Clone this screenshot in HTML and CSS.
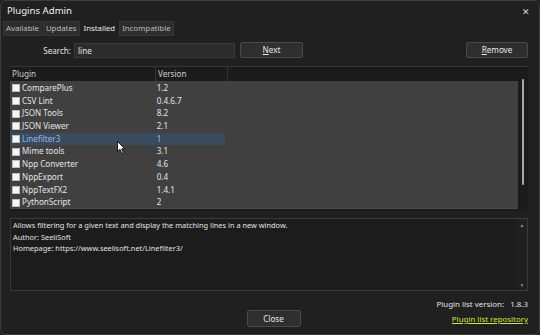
FILE: index.html
```html
<html>
<head><meta charset="utf-8">
<link rel="stylesheet" href="styles.css">
</head>
<body>
<div class="window">
  <div class="titlebar">
    <span class="title">Plugins Admin</span>
    <span class="close-x">&#x2715;</span>
  </div>

  <div class="tabs">
    <span class="tab">Available</span>
    <span class="tab">Updates</span>
    <span class="tab sel">Installed</span>
    <span class="tab">Incompatible</span>
  </div>

  <div class="search-row">
    <span class="search-label">Search:</span>
    <div class="search-input">line</div>
    <div class="btn btn-next"><u>N</u>ext</div>
    <div class="spacer"></div>
    <div class="btn btn-remove"><u>R</u>emove</div>
  </div>

  <div class="list">
    <div class="list-head">
      <div class="col-name">Plugin</div>
      <div class="col-ver">Version</div>
      <div class="col-rest"></div>
    </div>
    <div class="list-body">
      <div class="rows">
        <div class="row"><span class="name"><i class="cb"></i>ComparePlus</span><span class="ver">1.2</span></div>
        <div class="row"><span class="name"><i class="cb"></i>CSV Lint</span><span class="ver">0.4.6.7</span></div>
        <div class="row"><span class="name"><i class="cb"></i>JSON Tools</span><span class="ver">8.2</span></div>
        <div class="row"><span class="name"><i class="cb"></i>JSON Viewer</span><span class="ver">2.1</span></div>
        <div class="row selected"><span class="name"><i class="cb"></i>Linefilter3</span><span class="ver">1</span></div>
        <div class="row"><span class="name"><i class="cb"></i>Mime tools</span><span class="ver">3.1</span></div>
        <div class="row"><span class="name"><i class="cb"></i>Npp Converter</span><span class="ver">4.6</span></div>
        <div class="row"><span class="name"><i class="cb"></i>NppExport</span><span class="ver">0.4</span></div>
        <div class="row"><span class="name"><i class="cb"></i>NppTextFX2</span><span class="ver">1.4.1</span></div>
        <div class="row"><span class="name"><i class="cb"></i>PythonScript</span><span class="ver">2</span></div>
      </div>
      <div class="vscroll"><div class="thumb"></div></div>
    </div>
    <!-- mouse pointer over the list -->
    <svg class="cursor" width="9" height="14" viewBox="0 0 9 14">
      <path d="M0.5 0.5 L0.5 10.5 L3 8.3 L4.8 12.5 L6.3 11.8 L4.6 7.8 L7.8 7.8 Z" fill="#fff" stroke="#000" stroke-width="0.8"/>
    </svg>
  </div>

  <div class="desc">
    <div class="desc-text">
      Allows filtering for a given text and display the matching lines in a new window.<br>
      Author: SeeliSoft<br>
      Homepage: https://www.seelisoft.net/Linefilter3/
    </div>
    <div class="desc-scroll">
      <span class="arr">&#x25B2;</span>
      <span class="arr">&#x25BC;</span>
    </div>
  </div>

  <div class="footer">
    <div class="version-line">Plugin list version:&nbsp;&nbsp; 1.8.3</div>
    <div class="footer-row">
      <div></div>
      <div class="btn btn-close">Close</div>
      <div class="repo-link"><a href="#">Plugin list repository</a></div>
    </div>
  </div>
</div>
</body>
</html>
```

FILE: styles.css
```css
html, body {
	margin: 0;
	padding: 0;
	background: #1f1f1f;
}
.window {
	width: 538px;
	height: 333px;
	border: 1px solid #3c3c3c;
	border-radius: 6px;
	background: #202020;
	font-family: "Noto Sans", "Open Sans", sans-serif;
	font-size: 8.1px;
	color: #e4e4e4;
	position: relative;
	overflow: hidden;
}
.titlebar {
	height: 20px;
	display: flex;
	align-items: center;
	padding: 0 7px 0 6px;
	justify-content: space-between;
}
.title {
	font-size: 9.6px;
	color: #f0f0f0;
	margin-top: -1px;
}
.close-x {
	font-size: 9px;
	color: #d8d8d8;
	margin-right: 2px;
}
.tabs {
	display: flex;
	padding-left: 2px;
	height: 15px;
}
.tab {
	background: #2d2d2d;
	border: 1px solid #363636;
	color: #bdbdbd;
	padding: 0 2px;
	line-height: 13px;
	margin-right: 1px;
	font-size: 7.8px;
}
.tab.sel {
	background: #202020;
	border-color: #202020;
	color: #ececec;
}
.search-row {
	display: flex;
	align-items: center;
	margin-top: 6px;
	height: 16px;
	padding-right: 11px;
}
.search-label {
	width: 73px;
	text-align: right;
	padding-right: 3px;
	box-sizing: border-box;
}
.search-input {
	width: 161px;
	height: 15px;
	box-sizing: border-box;
	background: #2c2c2c;
	border: 1px solid #3a3a3a;
	padding-left: 3px;
	line-height: 13px;
}
.spacer {
	flex: 1;
}
.btn {
	height: 16px;
	box-sizing: border-box;
	background: #2f2f2f;
	border: 1px solid #4a4a4a;
	border-radius: 2px;
	text-align: center;
	line-height: 14px;
	color: #e8e8e8;
}
.btn-next {
	width: 63px;
	margin-left: 5px;
}
.btn-remove {
	width: 62px;
}
.list {
	position: relative;
	margin: 8px 11px 0 9px;
	height: 144px;
	border-top: 1px solid #363636;
	background: #1b1b1b;
}
.list-head {
	display: flex;
	height: 14px;
	line-height: 14px;
	color: #cfcfcf;
}
.col-name {
	width: 143px;
	padding-left: 2px;
	border-right: 1px solid #333;
}
.col-ver {
	width: 69px;
	padding-left: 2px;
	border-right: 1px solid #333;
}
.list-body {
	display: flex;
	height: 128px;
}
.rows {
	flex: 1;
	background: #404040;
	border-bottom: 1px solid #4a4a4a;
	padding-top: 1px;
}
.row {
	display: flex;
	height: 12.7px;
	line-height: 12.7px;
	width: 215px;
}
.row .name {
	width: 144px;
	display: flex;
	align-items: center;
	padding-left: 2px;
}
.row .ver {
	width: 69px;
	padding-left: 2px;
}
.row.selected {
	background: #3b4b5e;
	color: #8fb7ec;
}
.cb {
	display: inline-block;
	width: 8px;
	height: 8px;
	background: #f6f6f6;
	border: 1px solid #bcbcbc;
	box-sizing: border-box;
	margin-right: 2px;
}
.vscroll {
	width: 10px;
	background: #1b1b1b;
	position: relative;
}
.thumb {
	position: absolute;
	left: 4px;
	top: -2px;
	width: 2px;
	height: 106px;
	background: #a8a8a8;
	border-radius: 1px;
}
.cursor {
	position: absolute;
	left: 107px;
	top: 74px;
}
.desc {
	display: flex;
	margin: 7px 11px 0 9px;
	height: 73px;
	border: 1px solid #3a3a3a;
	background: #1c1c1c;
	box-sizing: border-box;
}
.desc-text {
	flex: 1;
	padding: 1px 2px;
	line-height: 11.6px;
	font-size: 7.4px;
	color: #e2e2e2;
}
.desc-scroll {
	width: 10px;
	display: flex;
	flex-direction: column;
	justify-content: space-between;
	align-items: center;
	background: #202020;
	padding: 3px 0 2px;
}
.arr {
	font-size: 5px;
	color: #8a8a8a;
}
.footer {
	padding: 7px 11px 0 9px;
}
.version-line {
	text-align: right;
	height: 12px;
	line-height: 12px;
	font-size: 7.9px;
}
.footer-row {
	display: grid;
	grid-template-columns: 1fr 63px 1fr;
	margin-top: 0;
	align-items: end;
}
.btn-close {
	height: 17px;
	line-height: 15px;
	margin-left: 9px;
}
.repo-link {
	text-align: right;
	line-height: 12px;
	margin-bottom: 2px;
	font-size: 7.9px;
}
.repo-link a {
	color: #d6e04a;
	text-decoration: underline;
}
```
